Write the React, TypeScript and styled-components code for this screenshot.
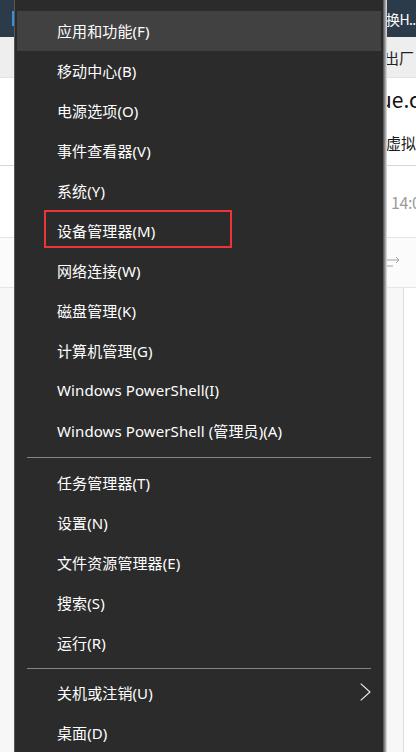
import React from "react";
import styled, { createGlobalStyle } from "styled-components";

const Global = createGlobalStyle`
  html, body { margin: 0; padding: 0; width: 416px; height: 752px; overflow: hidden; }
  body { font-family: "Noto Sans", "Noto Sans CJK SC", sans-serif; background: #ffffff; }
  #root { width: 416px; height: 752px; position: relative; overflow: hidden; }
`;

const Stage = styled.div`
  position: relative;
  width: 416px;
  height: 752px;
  overflow: hidden;
`;

/* ---------- backdrop (window behind the menu) ---------- */
const Backdrop = styled.div`
  display: flex;
  flex-direction: column;
  width: 100%;
  height: 100%;
`;

const Band = styled.div<{ $h: number; $bg: string; $line?: string; $pad?: number }>`
  height: ${(p) => p.$h}px;
  flex: 0 0 auto;
  background: ${(p) => p.$bg};
  border-bottom: ${(p) => (p.$line ? `1px solid ${p.$line}` : "none")};
  box-sizing: border-box;
  display: flex;
  align-items: center;
  padding-left: ${(p) => p.$pad ?? 386}px;
  white-space: nowrap;
  overflow: hidden;
`;

const TitleBand = styled(Band)`
  padding-left: 12px;
`;

const BlueMark = styled.div`
  width: 4px;
  height: 15px;
  background: #3b8fd9;
  margin-right: 370px;
  flex: 0 0 auto;
`;

const BgText = styled.span<{ $size?: number; $color?: string; $ls?: number }>`
  font-family: "Noto Sans CJK SC", "Noto Sans", sans-serif;
  font-size: ${(p) => p.$size ?? 15}px;
  letter-spacing: ${(p) => p.$ls ?? 0}px;
  color: ${(p) => p.$color ?? "#1a1a1a"};
  line-height: 1;
`;

const RestArea = styled.div`
  flex: 1 1 auto;
  display: flex;
  background: #f8f8f8;
`;

const RestLeft = styled.div`
  width: 403px;
  flex: 0 0 auto;
  border-right: 1px solid #dedede;
  background: #f7f7f7;
`;

const RestRight = styled.div`
  flex: 1 1 auto;
  background: #ffffff;
`;

/* ---------- the menu ---------- */
const Menu = styled.div`
  position: absolute;
  top: 0;
  left: 14px;
  width: 370px;
  height: 760px;
  box-sizing: border-box;
  background: #2b2b2b;
  border-left: 1px solid #575757;
  border-right: 1px solid #5e5e5e;
  box-shadow: 1px 0 0 #848484, 2px 0 0 #a9a9a9, 3px 0 0 #d2d2d2;
  padding: 11px 2px 0 2px;
  display: flex;
  flex-direction: column;
`;

const Item = styled.div<{ $active?: boolean }>`
  height: 40px;
  flex: 0 0 40px;
  box-sizing: border-box;
  display: flex;
  align-items: center;
  padding-left: 40px;
  padding-right: 10px;
  padding-bottom: 2px;
  background: ${(p) => (p.$active ? "#414141" : "transparent")};
  color: #ffffff;
  font-family: "Noto Sans", "Noto Sans CJK SC", sans-serif;
  font-size: 15px;
  white-space: nowrap;
`;

const Label = styled.span`
  flex: 1 1 auto;
  letter-spacing: 0.1px;
`;

const Separator = styled.div<{ $h: number }>`
  flex: 0 0 ${(p) => p.$h}px;
  height: ${(p) => p.$h}px;
  display: flex;
  align-items: center;
  padding: 0 10px;
  &::after {
    content: "";
    display: block;
    width: 100%;
    height: 1px;
    background: #858585;
  }
`;

const Highlight = styled.div`
  position: absolute;
  left: 29px;
  top: 210px;
  width: 188px;
  height: 38px;
  box-sizing: border-box;
  border: 2px solid #ee3535;
  pointer-events: none;
`;

const Chevron = () => (
  <svg width="11" height="18" viewBox="0 0 11 18" fill="none">
    <polyline points="0.7,0.7 10,9 0.7,17.3" stroke="#f2f2f2" strokeWidth="1.1" />
  </svg>
);

const Arrows = () => (
  <svg width="14" height="16" viewBox="0 0 14 16" fill="none">
    <line x1="0" y1="5" x2="12" y2="5" stroke="#a0a0a0" strokeWidth="1" />
    <polyline points="9,2 12,5 9,8" stroke="#a0a0a0" strokeWidth="1" />
    <line x1="0" y1="11" x2="6" y2="11" stroke="#a0a0a0" strokeWidth="1" />
  </svg>
);

const groups: string[][] = [
  [
    "应用和功能(F)",
    "移动中心(B)",
    "电源选项(O)",
    "事件查看器(V)",
    "系统(Y)",
    "设备管理器(M)",
    "网络连接(W)",
    "磁盘管理(K)",
    "计算机管理(G)",
    "Windows PowerShell(I)",
    "Windows PowerShell (管理员)(A)",
  ],
  ["任务管理器(T)", "设置(N)", "文件资源管理器(E)", "搜索(S)", "运行(R)"],
  ["关机或注销(U)", "桌面(D)"],
];

export default function App() {
  return (
    <>
      <Global />
      <Stage>
        <Backdrop>
          <TitleBand $h={37} $bg="#2c3b49">
            <BlueMark />
            <BgText $size={14} $ls={-0.6} $color="#ffffff">换H...</BgText>
          </TitleBand>
          <Band $h={41} $bg="#eeeeee" $line="#e2e2e2" $pad={384}>
            <BgText $color="#222222">出厂</BgText>
          </Band>
          <Band $h={42} $bg="#ffffff" $pad={379}>
            <BgText $size={21} $color="#111111">ue.c</BgText>
          </Band>
          <Band $h={46} $bg="#ffffff" $line="#d6d6d6" $pad={386}>
            <BgText $color="#1a1a1a">虚拟</BgText>
          </Band>
          <Band $h={72} $bg="#ffffff" $line="#e4e4e4" $pad={391}>
            <BgText $size={16} $ls={-0.4} $color="#9b9b9b">14:0</BgText>
          </Band>
          <Band $h={50} $bg="#fbfbfb" $line="#e6e6e6" $pad={387}>
            <Arrows />
          </Band>
          <RestArea>
            <RestLeft />
            <RestRight />
          </RestArea>
        </Backdrop>

        <Menu>
          {groups.map((g, gi) => (
            <React.Fragment key={gi}>
              {gi > 0 && <Separator $h={gi === 1 ? 12 : 10} />}
              {g.map((label, i) => (
                <Item key={label} $active={gi === 0 && i === 0}>
                  <Label>{label}</Label>
                  {label.startsWith("关机") && <Chevron />}
                </Item>
              ))}
            </React.Fragment>
          ))}
          <Highlight />
        </Menu>
      </Stage>
    </>
  );
}
